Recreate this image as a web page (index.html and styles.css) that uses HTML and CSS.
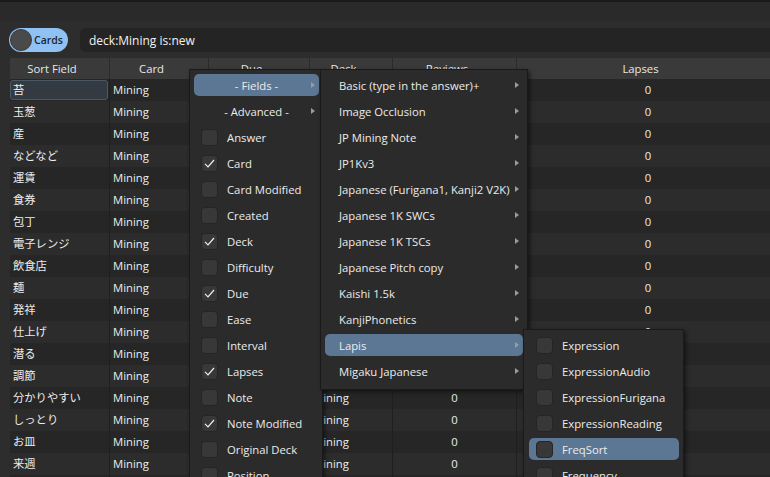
FILE: index.html
```html
<!DOCTYPE html>
<html>
<head>
<meta charset="utf-8">
<link rel="stylesheet" href="styles.css">
</head>
<body>
<div class="topbar"></div>
<div class="toolbar">
  <div class="toggle"><span class="knob"></span><span class="toggle-label">Cards</span></div>
  <div class="search">deck:Mining is:new</div>
</div>
<div class="table">
  <div class="row head">
    <div class="hc">Sort Field</div><div class="hc">Card</div><div class="hc">Due</div><div class="hc">Deck</div><div class="hc">Reviews</div><div class="hc">Lapses</div>
  </div>
  <div class="row odd"><div class="c l"><span class="focus">苔</span></div><div class="c l">Mining</div><div class="c"></div><div class="c l"></div><div class="c m"></div><div class="c m">0</div></div>
  <div class="row even"><div class="c l">玉葱</div><div class="c l">Mining</div><div class="c"></div><div class="c l"></div><div class="c m"></div><div class="c m">0</div></div>
  <div class="row odd"><div class="c l">産</div><div class="c l">Mining</div><div class="c"></div><div class="c l"></div><div class="c m"></div><div class="c m">0</div></div>
  <div class="row even"><div class="c l">などなど</div><div class="c l">Mining</div><div class="c"></div><div class="c l"></div><div class="c m"></div><div class="c m">0</div></div>
  <div class="row odd"><div class="c l">運賃</div><div class="c l">Mining</div><div class="c"></div><div class="c l"></div><div class="c m"></div><div class="c m">0</div></div>
  <div class="row even"><div class="c l">食券</div><div class="c l">Mining</div><div class="c"></div><div class="c l"></div><div class="c m"></div><div class="c m">0</div></div>
  <div class="row odd"><div class="c l">包丁</div><div class="c l">Mining</div><div class="c"></div><div class="c l"></div><div class="c m"></div><div class="c m">0</div></div>
  <div class="row even"><div class="c l">電子レンジ</div><div class="c l">Mining</div><div class="c"></div><div class="c l"></div><div class="c m"></div><div class="c m">0</div></div>
  <div class="row odd"><div class="c l">飲食店</div><div class="c l">Mining</div><div class="c"></div><div class="c l"></div><div class="c m"></div><div class="c m">0</div></div>
  <div class="row even"><div class="c l">麺</div><div class="c l">Mining</div><div class="c"></div><div class="c l"></div><div class="c m"></div><div class="c m">0</div></div>
  <div class="row odd"><div class="c l">発祥</div><div class="c l">Mining</div><div class="c"></div><div class="c l"></div><div class="c m"></div><div class="c m">0</div></div>
  <div class="row even"><div class="c l">仕上げ</div><div class="c l">Mining</div><div class="c"></div><div class="c l"></div><div class="c m"></div><div class="c m">0</div></div>
  <div class="row odd"><div class="c l">潜る</div><div class="c l">Mining</div><div class="c"></div><div class="c l"></div><div class="c m"></div><div class="c m"></div></div>
  <div class="row even"><div class="c l">調節</div><div class="c l">Mining</div><div class="c"></div><div class="c l"></div><div class="c m"></div><div class="c m"></div></div>
  <div class="row odd"><div class="c l">分かりやすい</div><div class="c l">Mining</div><div class="c"></div><div class="c l">Mining</div><div class="c m">0</div><div class="c m"></div></div>
  <div class="row even"><div class="c l">しっとり</div><div class="c l">Mining</div><div class="c"></div><div class="c l">Mining</div><div class="c m">0</div><div class="c m"></div></div>
  <div class="row odd"><div class="c l">お皿</div><div class="c l">Mining</div><div class="c"></div><div class="c l">Mining</div><div class="c m">0</div><div class="c m"></div></div>
  <div class="row even"><div class="c l">来週</div><div class="c l">Mining</div><div class="c"></div><div class="c l">Mining</div><div class="c m">0</div><div class="c m"></div></div>
  <div class="row odd"><div class="c l"></div><div class="c l"></div><div class="c"></div><div class="c l"></div><div class="c m"></div><div class="c m"></div></div>
</div>

<div class="menu m1">
  <div class="item center hl">- Fields -<span class="arrow"></span></div>
  <div class="item center">- Advanced -<span class="arrow"></span></div>
  <div class="item"><span class="cb"></span>Answer</div>
  <div class="item"><span class="cb"><svg viewBox="0 0 17 17" width="17" height="17"><path d="M4 8.8 L7 11.8 L13 5" fill="none" stroke="#f0f0f0" stroke-width="1.2"/></svg></span>Card</div>
  <div class="item"><span class="cb"></span>Card Modified</div>
  <div class="item"><span class="cb"></span>Created</div>
  <div class="item"><span class="cb"><svg viewBox="0 0 17 17" width="17" height="17"><path d="M4 8.8 L7 11.8 L13 5" fill="none" stroke="#f0f0f0" stroke-width="1.2"/></svg></span>Deck</div>
  <div class="item"><span class="cb"></span>Difficulty</div>
  <div class="item"><span class="cb"><svg viewBox="0 0 17 17" width="17" height="17"><path d="M4 8.8 L7 11.8 L13 5" fill="none" stroke="#f0f0f0" stroke-width="1.2"/></svg></span>Due</div>
  <div class="item"><span class="cb"></span>Ease</div>
  <div class="item"><span class="cb"></span>Interval</div>
  <div class="item"><span class="cb"><svg viewBox="0 0 17 17" width="17" height="17"><path d="M4 8.8 L7 11.8 L13 5" fill="none" stroke="#f0f0f0" stroke-width="1.2"/></svg></span>Lapses</div>
  <div class="item"><span class="cb"></span>Note</div>
  <div class="item"><span class="cb"><svg viewBox="0 0 17 17" width="17" height="17"><path d="M4 8.8 L7 11.8 L13 5" fill="none" stroke="#f0f0f0" stroke-width="1.2"/></svg></span>Note Modified</div>
  <div class="item"><span class="cb"></span>Original Deck</div>
  <div class="item"><span class="cb"></span>Position</div>
</div>

<div class="menu m2">
  <div class="item sub">Basic (type in the answer)+<span class="arrow"></span></div>
  <div class="item sub">Image Occlusion<span class="arrow"></span></div>
  <div class="item sub">JP Mining Note<span class="arrow"></span></div>
  <div class="item sub">JP1Kv3<span class="arrow"></span></div>
  <div class="item sub">Japanese (Furigana1, Kanji2 V2K)<span class="arrow"></span></div>
  <div class="item sub">Japanese 1K SWCs<span class="arrow"></span></div>
  <div class="item sub">Japanese 1K TSCs<span class="arrow"></span></div>
  <div class="item sub">Japanese Pitch copy<span class="arrow"></span></div>
  <div class="item sub">Kaishi 1.5k<span class="arrow"></span></div>
  <div class="item sub">KanjiPhonetics<span class="arrow"></span></div>
  <div class="item sub hl">Lapis<span class="arrow"></span></div>
  <div class="item sub">Migaku Japanese<span class="arrow"></span></div>
</div>

<div class="menu m3">
  <div class="item"><span class="cb"></span>Expression</div>
  <div class="item"><span class="cb"></span>ExpressionAudio</div>
  <div class="item"><span class="cb"></span>ExpressionFurigana</div>
  <div class="item"><span class="cb"></span>ExpressionReading</div>
  <div class="item hl"><span class="cb"></span>FreqSort</div>
  <div class="item"><span class="cb"></span>Frequency</div>
</div>
</body>
</html>
```

FILE: styles.css
```css
html, body {
  margin: 0;
  padding: 0;
}
body {
  width: 770px;
  height: 477px;
  overflow: hidden;
  position: relative;
  background: #2d2d2d;
  font-family: "Open Sans", "Noto Sans CJK JP", sans-serif;
  font-size: 11.3px;
  color: #ececec;
}
.topbar {
  height: 19px;
  border-top: 2px solid #1a1a1a;
  background: #2a2a2a;
}
.toolbar {
  display: flex;
  align-items: center;
  gap: 12px;
  padding: 7px 0 6px 9px;
}
.toggle {
  width: 59px;
  height: 24px;
  box-sizing: border-box;
  border-radius: 12px;
  background: #8fc1f3;
  display: flex;
  align-items: center;
  padding-left: 1px;
}
.knob {
  width: 22px;
  height: 22px;
  box-sizing: border-box;
  border-radius: 50%;
  background: #4a4a4a;
  border: 1px solid #3b3b3b;
}
.toggle-label {
  margin-left: 2px;
  color: #1c2530;
  font-size: 10.5px;
  font-weight: 600;
}
.search {
  flex: 1;
  height: 24px;
  background: #242424;
  border-radius: 6px 0 0 6px;
  padding-left: 9px;
  display: flex;
  align-items: center;
  font-size: 12px;
  color: #f2f2f2;
}
.table {
  margin-left: 10px;
}
.row {
  display: grid;
  grid-template-columns: 100px 99px 101px 83px 124px 263px;
  height: 22px;
}
.row.head {
  height: 21px;
  background: #3a3a3a;
}
.hc {
  border-right: 1px solid #2b2b2b;
  text-align: center;
  padding-right: 15px;
  line-height: 21px;
  color: #e8e8e8;
  white-space: nowrap;
  overflow: hidden;
}
.odd { background: #262626; }
.even { background: #2c2c2c; }
.c {
  border-right: 1px solid #1f1f1f;
  line-height: 22px;
  white-space: nowrap;
  overflow: hidden;
  position: relative;
}
.c.l { padding-left: 3px; }
.c.m { text-align: center; }
.focus {
  position: absolute;
  left: 0;
  top: 1px;
  right: 1px;
  bottom: 1px;
  border: 1px solid #4c5764;
  border-radius: 3px;
  background: #343a41;
  padding-left: 2px;
  line-height: 18px;
}
.menu {
  position: absolute;
  box-sizing: border-box;
  background: #2b2b2b;
  border: 1px solid #1a1a1a;
  box-shadow: 2px 2px 4px rgba(0, 0, 0, 0.5);
  padding: 2px 0;
  display: flex;
  flex-direction: column;
}
.m1 { left: 189px; top: 69px; width: 134px; height: 430px; }
.m2 { left: 320px; top: 69px; width: 208px; height: 321px; }
.m3 { left: 523px; top: 329px; width: 161px; height: 170px; }
.item {
  flex: none;
  height: 22px;
  margin: 2px 4px 2px 4px;
  display: flex;
  align-items: center;
  position: relative;
  border-radius: 5px;
  white-space: nowrap;
  padding-left: 7px;
}
.m1 .item { margin: 2px 3px 2px 4px; }
.m3 .item { margin: 2px 4px 2px 5px; }
.item.sub { padding-left: 14px; }
.item.center { justify-content: center; padding-left: 0; padding-right: 0; }
.item.hl { background: #5c7794; }
.arrow {
  position: absolute;
  right: 4px;
  top: 8px;
  width: 0;
  height: 0;
  border-left: 4px solid #9b9b9b;
  border-top: 3.5px solid transparent;
  border-bottom: 3.5px solid transparent;
}
.cb {
  width: 17px;
  height: 17px;
  box-sizing: border-box;
  border-radius: 4px;
  background: #383838;
  border: 1px solid #252525;
  margin-right: 9px;
  display: flex;
}
.cb svg { margin: -1px; }
```
